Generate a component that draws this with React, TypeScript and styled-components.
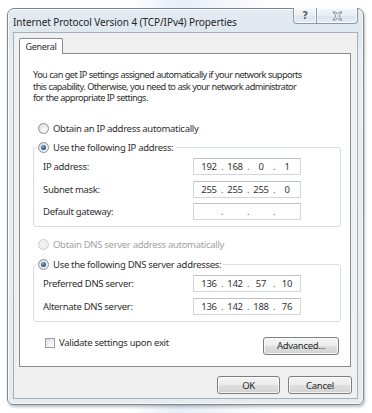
import React from 'react'
import styled, { createGlobalStyle, css } from 'styled-components'

const GlobalStyle = createGlobalStyle`
  html, body {
    margin: 0;
    padding: 0;
    background: #ffffff;
  }
  body {
    font-family: "Noto Sans", "Open Sans", sans-serif;
    font-size: 9.5px;
    letter-spacing: -0.3px;
    color: #2e2e2e;
  }
`

const Page = styled.div`
  width: 372px;
  height: 413px;
  box-sizing: border-box;
  padding: 8px 0 0 7px;
  overflow: hidden;
  background: linear-gradient(90deg, #ffffff 0%, #ffffff 35%, #e6eef7 48%, #f3f6fa 60%, #ffffff 75%);
`

const Window = styled.div`
  width: 357px;
  height: 397px;
  box-sizing: border-box;
  display: flex;
  flex-direction: column;
  padding: 0 5px 5px;
  border: 1px solid #7e8790;
  border-radius: 7px 7px 6px 6px;
  background: linear-gradient(180deg, #e4ebf2 0%, #dfe7ef 6%, #e9eef3 12%, #e6ebf0 100%);
  box-shadow: inset 0 0 0 1px rgba(255, 255, 255, 0.7), 1px 2px 3px rgba(0, 0, 0, 0.25);
`

const TitleBar = styled.div`
  height: 23px;
  display: flex;
  align-items: flex-start;
  flex-shrink: 0;
`

const Title = styled.div`
  margin-top: 7px;
  font-size: 10px;
  line-height: 12px;
  letter-spacing: -0.08px;
  color: #262626;
  white-space: nowrap;
`

const Captions = styled.div`
  display: flex;
  margin-left: auto;
  margin-top: -1px;
`

const CaptionButton = styled.div<{ $wide?: boolean }>`
  width: ${({ $wide }) => ($wide ? 41 : 24)}px;
  height: 16px;
  box-sizing: border-box;
  display: flex;
  align-items: center;
  justify-content: center;
  border: 1px solid #8f98a2;
  border-top: none;
  background: linear-gradient(180deg, #f4f7fa 0%, #e8eef4 50%, #dbe3eb 51%, #e6edf3 100%);
  box-shadow: inset 0 0 0 1px rgba(255, 255, 255, 0.6);
  color: #5a6169;
  font-family: "DejaVu Sans", sans-serif;
  font-size: 10px;
  font-weight: bold;
  ${({ $wide }) =>
    $wide
      ? css`
          border-left: none;
          border-radius: 0 0 4px 0;
        `
      : css`
          border-radius: 0 0 0 4px;
        `}
`

const Client = styled.div`
  flex: 1;
  display: flex;
  flex-direction: column;
  padding: 5px 6px 0 5px;
  background: #f0f0f0;
  border: 1px solid #a6afb9;
`

const TabStrip = styled.div`
  display: flex;
  height: 16px;
  flex-shrink: 0;
`

const Tab = styled.div`
  width: 44px;
  box-sizing: border-box;
  display: flex;
  align-items: center;
  justify-content: center;
  background: #ffffff;
  border: 1px solid #898c95;
  border-bottom: none;
  border-radius: 2px 2px 0 0;
  font-size: 9px;
`

const TabFiller = styled.div`
  flex: 1;
  border-bottom: 1px solid #898c95;
`

const Panel = styled.div`
  height: 313px;
  box-sizing: border-box;
  flex-shrink: 0;
  display: flex;
  flex-direction: column;
  padding: 15px 9px 0 13px;
  background: #ffffff;
  border: 1px solid #898c95;
  border-top: none;
`

const Intro = styled.p`
  margin: 0;
  font-size: 9.2px;
  letter-spacing: -0.6px;
  word-spacing: 0.3px;
  line-height: 11.5px;
  white-space: nowrap;
`

const OptionRow = styled.label<{ $disabled?: boolean; $top: number }>`
  display: flex;
  align-items: center;
  gap: 4px;
  height: 13px;
  margin-top: ${({ $top }) => $top}px;
  padding-left: 5px;
  color: ${({ $disabled }) => ($disabled ? '#a2a2a2' : 'inherit')};
`

const Radio = styled.span<{ $checked?: boolean; $disabled?: boolean }>`
  width: 11px;
  height: 11px;
  box-sizing: border-box;
  flex-shrink: 0;
  display: flex;
  align-items: center;
  justify-content: center;
  border-radius: 50%;
  border: 1px solid ${({ $disabled }) => ($disabled ? '#c9cbcd' : '#8e9297')};
  background: ${({ $disabled }) =>
    $disabled
      ? 'radial-gradient(circle at 50% 50%, #f4f4f4 0%, #ececec 100%)'
      : 'radial-gradient(circle at 60% 60%, #ffffff 0%, #e3e4e6 60%, #cfd1d4 100%)'};
  &::after {
    content: '';
    display: ${({ $checked }) => ($checked ? 'block' : 'none')};
    width: 5px;
    height: 5px;
    border-radius: 50%;
    background: radial-gradient(circle at 40% 35%, #8fb4dd 0%, #2a5d94 55%, #173f6b 100%);
  }
`

const Group = styled.fieldset<{ $top: number }>`
  margin: ${({ $top }) => $top}px 0 0;
  padding: 4.5px 39px 6px 0;
  min-width: 0;
  border: 1px solid #d5dde3;
  border-radius: 3px;
  display: flex;
  flex-direction: column;
  gap: 5.5px;
`

const Legend = styled.legend`
  margin-left: 2px;
  padding: 0 2px;
  display: flex;
  align-items: center;
  gap: 4px;
  height: 13px;
`

const FieldRow = styled.div`
  display: flex;
  align-items: center;
  justify-content: space-between;
  height: 17px;
  padding-left: 9px;
`

const IpBox = styled.div`
  width: 108px;
  height: 17px;
  box-sizing: border-box;
  display: flex;
  align-items: center;
  padding-left: 4px;
  border: 1px solid #d3d5d9;
  border-top-color: #bfc2c7;
  background: #ffffff;
  color: #333333;
`

const Octet = styled.span`
  width: 22px;
  text-align: center;
`

const Dot = styled.span`
  width: 4px;
  text-align: center;
  color: #555555;
`

const BottomRow = styled.div`
  display: flex;
  align-items: flex-start;
  justify-content: space-between;
  margin-top: 15px;
  padding-left: 12px;
`

const CheckRow = styled.label`
  display: flex;
  align-items: center;
  gap: 4px;
  height: 10px;
  margin-top: 1px;
`

const Checkbox = styled.span`
  width: 10px;
  height: 10px;
  box-sizing: border-box;
  border: 1px solid #9a9ea3;
  background: linear-gradient(135deg, #d9dbde 0%, #f3f3f4 60%, #ffffff 100%);
`

const Button = styled.div<{ $width: number }>`
  width: ${({ $width }) => $width}px;
  height: 18px;
  box-sizing: border-box;
  display: flex;
  align-items: center;
  justify-content: center;
  border: 1px solid #7d7d7d;
  border-radius: 3px;
  background: linear-gradient(180deg, #f4f4f4 0%, #ececec 48%, #dedede 52%, #d2d2d2 100%);
  box-shadow: inset 0 0 0 1px rgba(255, 255, 255, 0.75);
  color: #2a2a2a;
`

const AdvancedButton = styled(Button)`
  margin-right: 2px;
`

const Footer = styled.div`
  display: flex;
  justify-content: flex-end;
  gap: 8px;
  margin-top: 9px;
  margin-right: -1px;
`

const CloseGlyph = () => (
  <svg width="11" height="10" viewBox="0 0 11 10">
    <path
      d="M1 1h2.6l1.9 2.2L7.4 1H10L6.8 5 10 9H7.4L5.5 6.8 3.6 9H1l3.2-4z"
      fill="#f5f7f9"
      stroke="#6e7680"
      strokeWidth="0.9"
      strokeLinejoin="round"
    />
  </svg>
)

const IpAddress = ({ value }: { value?: string[] }) => {
  const parts = value ?? ['', '', '', '']
  return (
    <IpBox>
      {parts.map((part, i) => (
        <React.Fragment key={i}>
          {i > 0 && <Dot>.</Dot>}
          <Octet>{part}</Octet>
        </React.Fragment>
      ))}
    </IpBox>
  )
}

const ipRows = [
  { label: 'IP address:', value: ['192', '168', '0', '1'] },
  { label: 'Subnet mask:', value: ['255', '255', '255', '0'] },
  { label: 'Default gateway:' },
]

const dnsRows = [
  { label: 'Preferred DNS server:', value: ['136', '142', '57', '10'] },
  { label: 'Alternate DNS server:', value: ['136', '142', '188', '76'] },
]

export default function App() {
  return (
    <>
      <GlobalStyle />
      <Page>
        <Window>
          <TitleBar>
            <Title>Internet Protocol Version 4 (TCP/IPv4) Properties</Title>
            <Captions>
              <CaptionButton>?</CaptionButton>
              <CaptionButton $wide>
                <CloseGlyph />
              </CaptionButton>
            </Captions>
          </TitleBar>
          <Client>
            <TabStrip>
              <Tab>General</Tab>
              <TabFiller />
            </TabStrip>
            <Panel>
              <Intro>
                You can get IP settings assigned automatically if your network supports
                <br />
                this capability. Otherwise, you need to ask your network administrator
                <br />
                for the appropriate IP settings.
              </Intro>

              <OptionRow $top={18}>
                <Radio />
                Obtain an IP address automatically
              </OptionRow>

              <Group $top={6}>
                <Legend>
                  <Radio $checked />
                  Use the following IP address:
                </Legend>
                {ipRows.map((row) => (
                  <FieldRow key={row.label}>
                    {row.label}
                    <IpAddress value={row.value} />
                  </FieldRow>
                ))}
              </Group>

              <OptionRow $top={10.5} $disabled>
                <Radio $disabled />
                Obtain DNS server address automatically
              </OptionRow>

              <Group $top={7}>
                <Legend>
                  <Radio $checked />
                  Use the following DNS server addresses:
                </Legend>
                {dnsRows.map((row) => (
                  <FieldRow key={row.label}>
                    {row.label}
                    <IpAddress value={row.value} />
                  </FieldRow>
                ))}
              </Group>

              <BottomRow>
                <CheckRow>
                  <Checkbox />
                  Validate settings upon exit
                </CheckRow>
                <AdvancedButton $width={76}>Advanced...</AdvancedButton>
              </BottomRow>
            </Panel>
            <Footer>
              <Button $width={63}>OK</Button>
              <Button $width={64}>Cancel</Button>
            </Footer>
          </Client>
        </Window>
      </Page>
    </>
  )
}
